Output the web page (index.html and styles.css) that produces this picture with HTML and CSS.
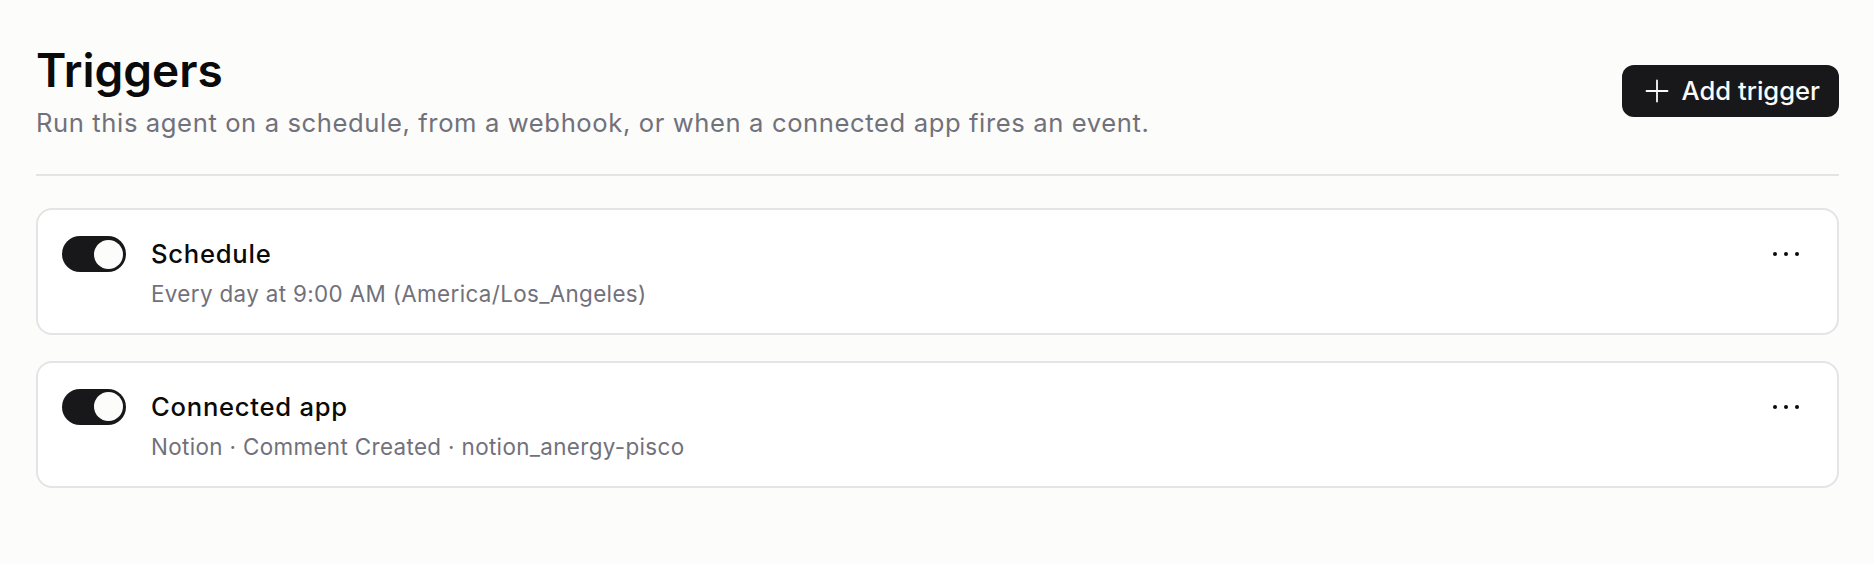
FILE: index.html
```html
<!DOCTYPE html>
<html lang="en">
<head>
<meta charset="utf-8">
<title>Triggers</title>
<link rel="stylesheet" href="styles.css">
</head>
<body>
<main class="page">
  <header class="header">
    <div class="header-text">
      <h1 class="title">Triggers</h1>
      <p class="subtitle">Run this agent on a schedule, from a webhook, or when a connected app fires an event.</p>
    </div>
    <button class="add-btn" type="button">
      <svg class="plus" viewBox="0 0 24 24" width="24" height="24" aria-hidden="true"><path d="M12 1.5v21M1.5 12h21" stroke="currentColor" stroke-width="1.8" stroke-linecap="round" fill="none"/></svg>
      <span>Add trigger</span>
    </button>
  </header>
  <hr class="divider">
  <section class="list">
    <article class="card">
      <div class="toggle is-on"><span class="knob"></span></div>
      <div class="card-text">
        <div class="card-title">Schedule</div>
        <div class="card-sub">Every day at 9:00 AM (America/Los_Angeles)</div>
      </div>
      <button class="more" type="button" aria-label="More">
        <svg viewBox="0 0 30 8" width="30" height="8" aria-hidden="true"><circle cx="4" cy="4" r="2" fill="currentColor"/><circle cx="15" cy="4" r="2" fill="currentColor"/><circle cx="26" cy="4" r="2" fill="currentColor"/></svg>
      </button>
    </article>
    <article class="card">
      <div class="toggle is-on"><span class="knob"></span></div>
      <div class="card-text">
        <div class="card-title">Connected app</div>
        <div class="card-sub">Notion · Comment Created · notion_anergy-pisco</div>
      </div>
      <button class="more" type="button" aria-label="More">
        <svg viewBox="0 0 30 8" width="30" height="8" aria-hidden="true"><circle cx="4" cy="4" r="2" fill="currentColor"/><circle cx="15" cy="4" r="2" fill="currentColor"/><circle cx="26" cy="4" r="2" fill="currentColor"/></svg>
      </button>
    </article>
  </section>
</main>
</body>
</html>
```
FILE: styles.css
```css
* { box-sizing: border-box; }
html, body { margin: 0; padding: 0; }
body {
  background: #fcfcfb;
  font-family: Inter, "Noto Sans", "Liberation Sans", sans-serif;
  color: #0a0a0b;
}
.page {
  padding: 43px 35px 40px 36px;
}
.header {
  display: flex;
  justify-content: space-between;
  align-items: center;
}
.title {
  margin: 0;
  font-size: 46px;
  line-height: 55px;
  font-weight: 600;
  letter-spacing: 0;
  color: #0a0a0b;
}
.subtitle {
  margin: 6px 0 0;
  font-size: 25.6px;
  line-height: 38px;
  letter-spacing: 0.61px;
  color: #71717b;
}
.add-btn {
  display: flex;
  align-items: center;
  gap: 13px;
  height: 52px;
  padding: 0 19px 0 23px;
  margin-top: -4px;
  border: 0;
  border-radius: 12px;
  background: #18181b;
  color: #fafafa;
  font-family: inherit;
  font-size: 25.6px;
  font-weight: 500;
}
.plus { display: block; }
.divider {
  margin: 32px 0 0;
  border: 0;
  height: 2px;
  background: #e4e4e7;
}
.list {
  display: flex;
  flex-direction: column;
  gap: 25.6px;
  margin-top: 32px;
}
.card {
  display: flex;
  align-items: flex-start;
  gap: 25px;
  padding: 26px 25.6px 23px 24px;
  background: #ffffff;
  border: 2px solid #e4e4e7;
  border-radius: 16px;
}
.toggle {
  flex: none;
  width: 64px;
  height: 36px;
  border-radius: 18px;
  background: #18181b;
  padding: 3.5px;
  display: flex;
  justify-content: flex-end;
}
.knob {
  width: 29px;
  height: 29px;
  border-radius: 50%;
  background: #fcfcfb;
}
.card-text {
  flex: 1;
  min-width: 0;
}
.card-title {
  font-size: 25.6px;
  line-height: 36px;
  font-weight: 500;
  letter-spacing: 0.75px;
  color: #0a0a0b;
}
.card-sub {
  margin-top: 5px;
  font-size: 22.4px;
  line-height: 33px;
  letter-spacing: 0.36px;
  color: #71717b;
}
.more {
  flex: none;
  display: flex;
  align-items: center;
  justify-content: center;
  width: 40px;
  height: 36px;
  margin-right: 5px;
  padding: 0;
  border: 0;
  background: transparent;
  color: #0a0a0b;
}
.more svg { display: block; }
```
